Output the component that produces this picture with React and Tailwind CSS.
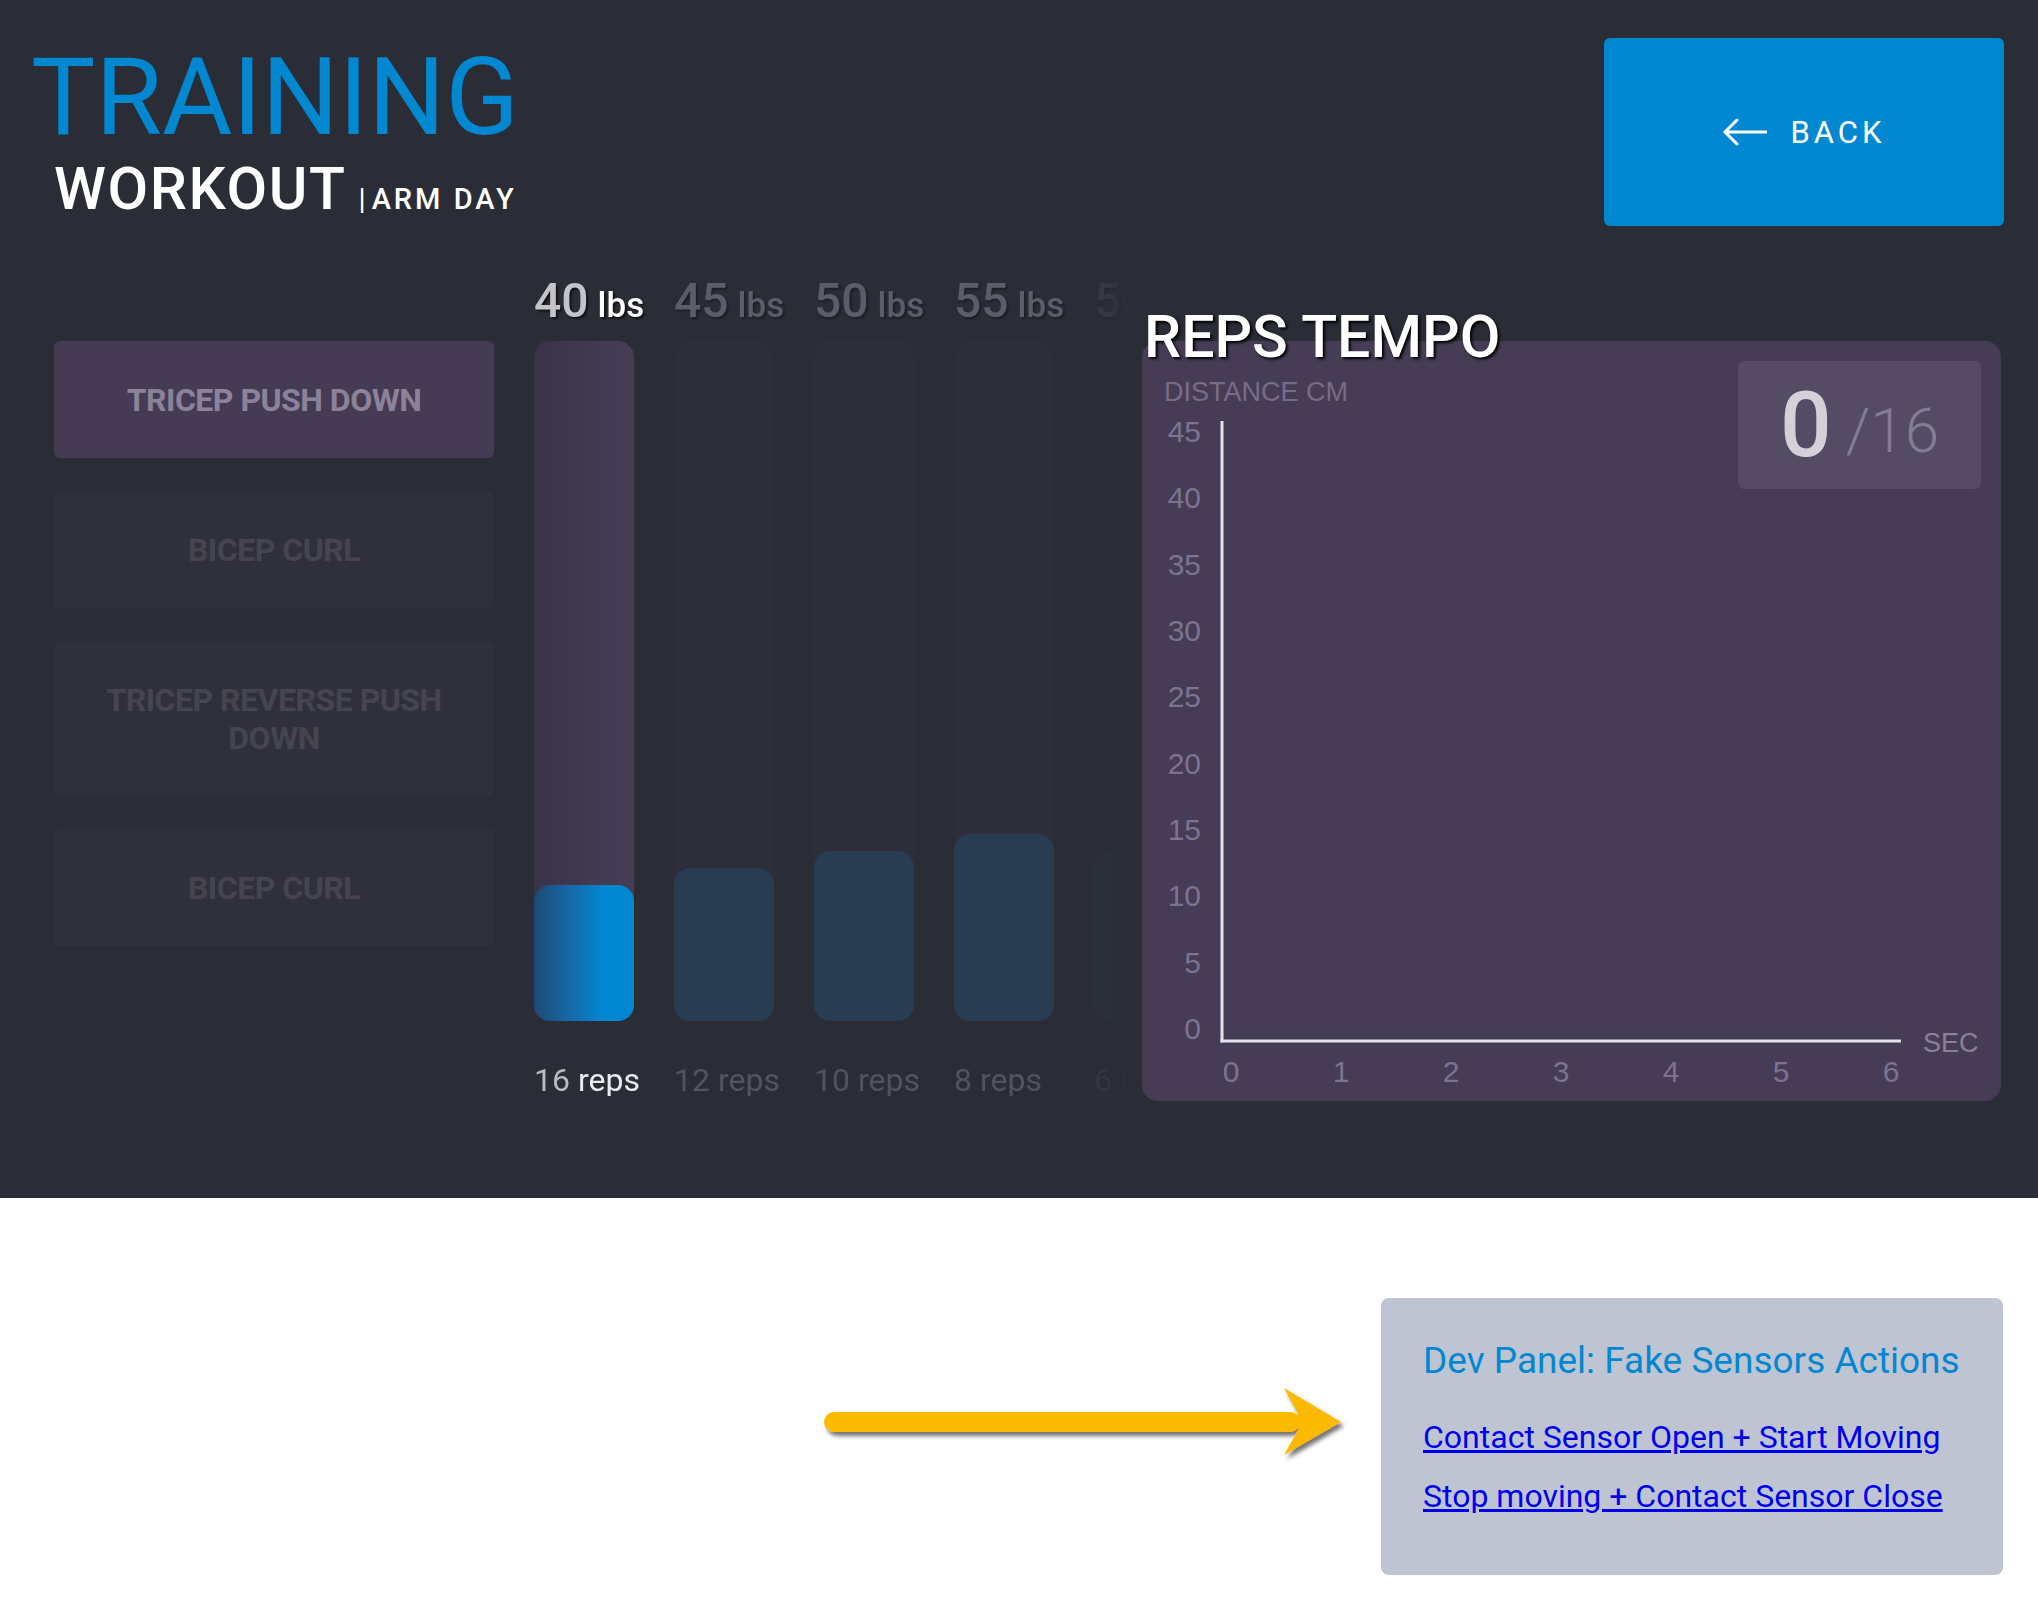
import React from 'react';

const exercises = [
  { name: 'TRICEP PUSH DOWN', active: true },
  { name: 'BICEP CURL' },
  { name: 'TRICEP REVERSE PUSH DOWN', tall: true },
  { name: 'BICEP CURL' },
];

// fill = height of the coloured part of each bar
const sets = [
  { lbs: 40, reps: 16, fill: 136, active: true },
  { lbs: 45, reps: 12, fill: 153 },
  { lbs: 50, reps: 10, fill: 170 },
  { lbs: 55, reps: 8, fill: 187 },
  { lbs: 50, reps: 6, fill: 170, faded: true },
];

const yTicks = [45, 40, 35, 30, 25, 20, 15, 10, 5, 0];
const xTicks = [0, 1, 2, 3, 4, 5, 6];

const BackArrow = () => (
  <svg width="44" height="28" viewBox="0 0 44 28" fill="none" stroke="white" strokeWidth="3" strokeLinecap="round" strokeLinejoin="round">
    <path d="M2 14H43" />
    <path d="M14 2L2 14L14 26" />
  </svg>
);

const TempoChart = () => (
  <svg className="block h-full w-full" viewBox="0 0 859 760" style={{ fontFamily: '"Liberation Sans", Arial, sans-serif' }}>
    <text x="22" y="60" fontSize="27" fill="#776d87">DISTANCE CM</text>
    {yTicks.map((t, i) => (
      <text key={t} x="59" y={101 + i * 66.33} fontSize="30" fill="#7d7390" textAnchor="end">{t}</text>
    ))}
    {xTicks.map((t, i) => (
      <text key={t} x={89 + i * 110} y="741" fontSize="30" fill="#7d7390" textAnchor="middle">{t}</text>
    ))}
    <text x="781" y="711" fontSize="27" fill="#8a8098">SEC</text>
    <line x1="80" y1="80" x2="80" y2="701.5" stroke="#e4e1e8" strokeWidth="3" />
    <line x1="78.5" y1="700" x2="759" y2="700" stroke="#e4e1e8" strokeWidth="3" />
  </svg>
);

const PointerArrow = () => (
  <svg width="530" height="80" viewBox="0 0 530 80">
    <defs>
      <filter id="arrowShadow" x="-5%" y="-40%" width="110%" height="180%">
        <feDropShadow dx="3" dy="4" stdDeviation="2" floodColor="#000" floodOpacity="0.55" />
      </filter>
    </defs>
    <g filter="url(#arrowShadow)" fill="#fbb900">
      <rect x="4" y="30" width="476" height="20" rx="10" />
      <polygon points="464,6 521,40 464,73 478,48 478,32" />
    </g>
  </svg>
);

export default function App() {
  return (
    <div className="min-h-screen bg-white font-['Roboto',sans-serif]">
      <div className="h-[1198px] bg-[#2a2d36]">
        <header className="flex items-start justify-between">
          <div className="pl-[31px] pt-[43px]">
            <h1 className="text-[108px] leading-none text-[#0288d1]">TRAINING</h1>
            <div className="mt-[8px] flex items-baseline pl-[23px] text-white">
              <span className="text-[59px] font-medium leading-none tracking-[1.6px]">WORKOUT</span>
              <span className="ml-[12px] text-[29px] leading-none">|</span>
              <span className="ml-[6px] text-[29px] font-medium leading-none tracking-[3px]">ARM DAY</span>
            </div>
          </div>
          <button className="mr-[34px] mt-[38px] flex h-[188px] w-[400px] items-center justify-center gap-[24px] rounded-md bg-[#0288d1] text-white">
            <BackArrow />
            <span className="text-[31px] leading-none tracking-[4px]">BACK</span>
          </button>
        </header>

        <main className="mt-[51px] flex items-start">
          <div className="ml-[54px] mt-[64px] flex w-[440px] shrink-0 flex-col gap-[33px]">
            {exercises.map((ex, i) => (
              <div
                key={i}
                className={
                  'flex items-center justify-center rounded-md px-8 text-center text-[32px] font-bold leading-[38px] tracking-[-0.5px] ' +
                  (ex.tall ? 'h-[155px] ' : 'h-[117px] ') +
                  (ex.active ? 'bg-[#463b54] text-[#8c8399]' : 'bg-[#30303c] text-[#45454f]')
                }
              >
                {ex.name}
              </div>
            ))}
          </div>

          <div className="ml-[40px] flex w-[596px] shrink-0 gap-[40px] overflow-hidden [mask-image:linear-gradient(to_right,black_calc(100%-24px),transparent)]">
            {sets.map((s, i) => (
              <div key={i} className={'flex w-[100px] shrink-0 flex-col ' + (s.faded ? 'opacity-25' : '')}>
                <div className="flex h-[64px] items-start whitespace-nowrap leading-none">
                  <span className={'text-[48px] font-medium ' + (s.active ? 'text-[#c3c3c8] [text-shadow:2px_2px_2px_rgba(0,0,0,0.6)]' : 'text-[#5b5e68] [text-shadow:2px_2px_2px_rgba(0,0,0,0.3)]')}>
                    {s.lbs}
                    <span className={'ml-[9px] text-[35px] ' + (s.active ? 'text-white' : '')}>lbs</span>
                  </span>
                </div>
                <div
                  className={
                    'flex h-[680px] flex-col justify-end rounded-2xl ' +
                    (s.active ? 'bg-gradient-to-r from-[#39334a] to-[#483d57]' : 'bg-[#2e2d3a]')
                  }
                >
                  <div
                    className={
                      'rounded-2xl ' +
                      (s.active ? 'bg-[linear-gradient(90deg,#1d4a74_0%,#1668a6_35%,#0288d1_70%)]' : 'bg-[#283d52]')
                    }
                    style={{ height: s.fill }}
                  />
                </div>
                <div className="mt-[43px] whitespace-nowrap text-[32px] leading-none">
                  {s.active ? (
                    <>
                      <span className="text-[#b9b9c1]">{s.reps}</span>
                      <span className="text-[#ececf0]"> reps</span>
                    </>
                  ) : (
                    <span className="text-[#51545f]">{s.reps} reps</span>
                  )}
                </div>
              </div>
            ))}
          </div>

          <div className="ml-[12px] flex w-[859px] shrink-0 flex-col">
            <h2 className="relative z-10 -mb-[25px] ml-[2px] mt-[30px] h-[59px] text-[59px] font-medium leading-none text-white [text-shadow:2px_2px_3px_#000]">
              REPS TEMPO
            </h2>
            <div className="relative h-[760px] rounded-2xl bg-[#463c55]">
              <TempoChart />
              <div className="absolute right-[20px] top-[20px] flex h-[128px] w-[243px] items-center justify-center rounded-md bg-[#554b65]">
                <span className="text-[91px] font-medium leading-none text-[#d3d0d8]">0</span>
                <span className="ml-[14px] mt-[12px] text-[62px] font-light leading-none text-[#857b94]">/16</span>
              </div>
            </div>
          </div>
        </main>
      </div>

      <div className="flex items-start justify-end pr-[35px] pt-[100px]">
        <div className="mr-[31px] mt-[84px]">
          <PointerArrow />
        </div>
        <div className="h-[277px] w-[622px] rounded-lg bg-[#bfc4d2] pl-[42px] pt-[44px]">
          <h3 className="text-[37px] leading-none text-[#0288d1]">Dev Panel: Fake Sensors Actions</h3>
          <div className="mt-[42px] flex flex-col items-start gap-[27px] text-[32px] leading-none">
            <a href="#" className="text-[#0000ee] underline">Contact Sensor Open + Start Moving</a>
            <a href="#" className="text-[#0000ee] underline">Stop moving + Contact Sensor Close</a>
          </div>
        </div>
      </div>
    </div>
  );
}
